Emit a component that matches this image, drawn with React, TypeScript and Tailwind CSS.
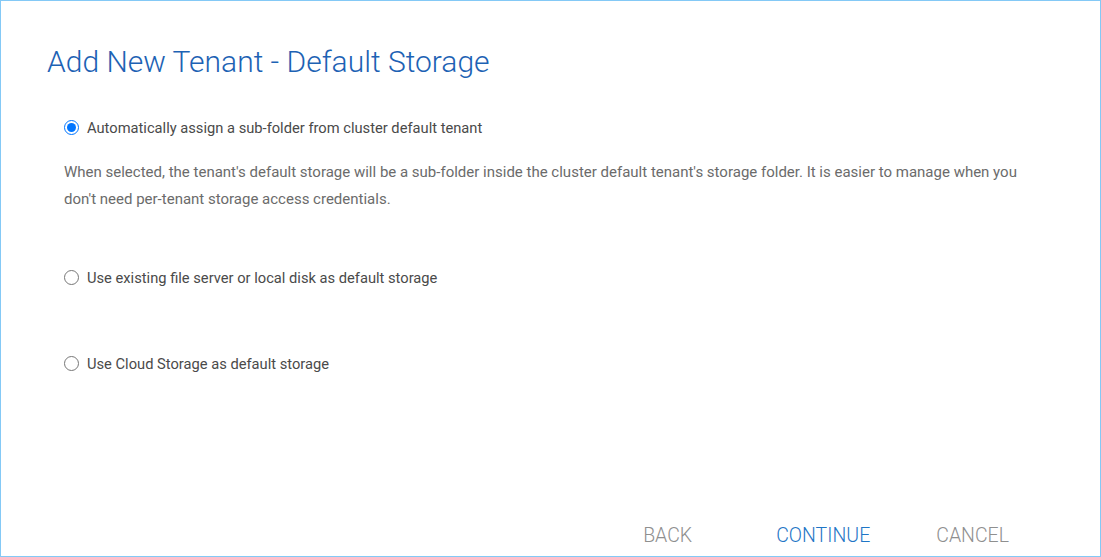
import React, { useState } from "react";

export default function App() {
  const [sel, setSel] = useState(0);
  const font = { fontFamily: "Roboto, 'Noto Sans', sans-serif" };
  const opts = [
    "Automatically assign a sub-folder from cluster default tenant",
    "Use existing file server or local disk as default storage",
    "Use Cloud Storage as default storage",
  ];
  const Radio = ({ i }: { i: number }) => (
    <label className="flex items-center gap-[8px] cursor-pointer">
      <input
        type="radio"
        name="storage"
        checked={sel === i}
        onChange={() => setSel(i)}
        className="m-0 w-[15px] h-[15px] accent-[#0075ff]"
      />
      <span className="text-[14.7px] text-[#4a4a4a]">{opts[i]}</span>
    </label>
  );
  return (
    <div
      style={font}
      className="w-[1101px] h-[557px] border border-[#84c9f6] bg-white flex flex-col"
    >
      <h1 className="pl-[46px] pt-[41px] text-[30px] leading-[40px] font-light text-[#1d62b4]">
        Add New Tenant - Default Storage
      </h1>
      <div className="pl-[63px] pr-[60px] flex flex-col">
        <div className="mt-[34px] h-[24px] flex items-center">
          <Radio i={0} />
        </div>
        <p className="mt-[19px] text-[15px] leading-[27px] text-[#6b6b6b] pr-[10px]">
          When selected, the tenant's default storage will be a sub-folder inside the cluster default tenant's storage folder. It is easier to manage when you don't need per-tenant storage access credentials.
        </p>
        <div className="mt-[53px] h-[24px] flex items-center">
          <Radio i={1} />
        </div>
        <div className="mt-[62px] h-[24px] flex items-center">
          <Radio i={2} />
        </div>
      </div>
      <div className="mt-auto mb-[5px] flex justify-end items-center h-[30px] pr-[91px] text-[19.5px] font-light">
        <button className="text-[#8f8f8f] mr-[84px]">BACK</button>
        <button className="text-[#1f76c6] mr-[66px]">CONTINUE</button>
        <button className="text-[#8f8f8f]">CANCEL</button>
      </div>
    </div>
  );
}
